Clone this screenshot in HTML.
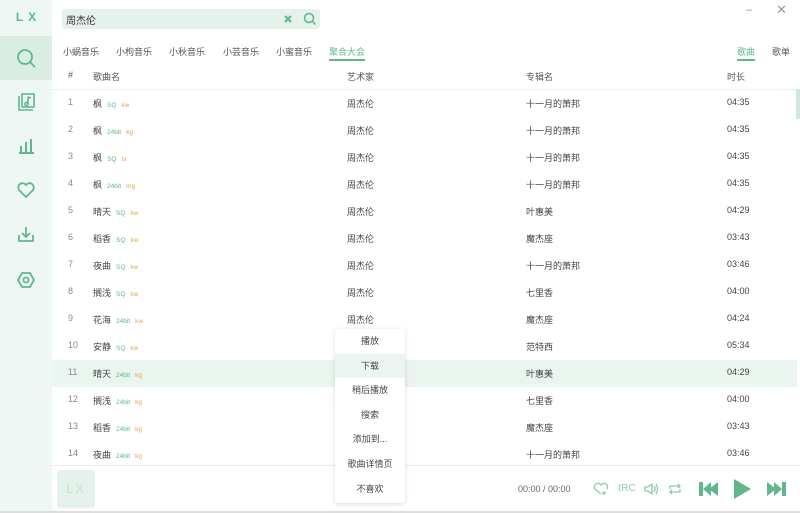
<!DOCTYPE html>
<html><head><meta charset="utf-8"><style>
*{margin:0;padding:0;box-sizing:border-box}
body{width:800px;height:513px;overflow:hidden;background:#fff;font-family:"Liberation Sans","Noto Sans CJK SC",sans-serif;font-size:9px;color:#444;position:relative}
.side{position:absolute;left:0;top:0;width:52px;height:513px;background:#eef7f3}
.logo{position:absolute;top:10px;left:0;width:52px;text-align:center;color:#5fb78d;font-weight:bold;font-size:12px;letter-spacing:5px;padding-left:5px}
.nav{position:absolute;left:0;width:52px;height:44px;display:flex;align-items:center;justify-content:center}
.nav.act{background:#d9ede3}
.search{position:absolute;left:62px;top:9px;width:258px;height:20px;background:#e4f2eb;border-radius:3px}
.search span{position:absolute;left:4px;top:3px;font-size:10px;color:#333}
.tabs span{position:absolute;top:45px;font-size:9px;color:#555}
.hdr span{position:absolute;top:70px;color:#555}
.row{position:absolute;left:52px;width:745px;height:27px}
.row span{position:absolute;top:7px}
.q{font-size:6.5px;color:#5fb78d;font-weight:normal}
.s{font-size:6.5px;color:#e0a84a;font-weight:normal}
.menu{position:absolute;z-index:5;left:335px;top:329px;width:70px;height:174px;background:#fff;box-shadow:0 1px 5px rgba(0,0,0,.15);border-radius:3px}
.menu div{height:24.6px;line-height:24.6px;text-align:center;color:#444;font-size:9px}
.foot{position:absolute;left:52px;top:465px;width:748px;height:46px;border-top:1px solid #eee;background:#fff}
</style></head><body>
<div class="side">
<div class="logo">LX</div>
<div class="nav act" style="top:36px"><svg width="22" height="22" viewBox="0 0 22 22" fill="none" stroke="#5fb78d" stroke-width="1.8"><circle cx="10" cy="10" r="7"/><path d="M15 15l5 5"/></svg></div>
<div class="nav" style="top:80px"><svg width="20" height="20" viewBox="0 0 20 20" fill="none" stroke="#5fb78d" stroke-width="1.6"><path d="M3 4v14h14"/><rect x="6" y="2" width="12" height="13"/><path d="M12 5v7"/><circle cx="10.5" cy="12" r="1.6"/><path d="M12 5l3 1"/></svg></div>
<div class="nav" style="top:124px"><svg width="20" height="20" viewBox="0 0 20 20" stroke="#5fb78d" stroke-width="2"><path d="M3 17h15M5 10v7M10 6v11M15 3v14"/></svg></div>
<div class="nav" style="top:168px"><svg width="20" height="20" viewBox="0 0 20 20" fill="none" stroke="#5fb78d" stroke-width="1.8"><path d="M10 17L3 10a4 4 0 017-5 4 4 0 017 5z"/></svg></div>
<div class="nav" style="top:212px"><svg width="20" height="20" viewBox="0 0 20 20" fill="none" stroke="#5fb78d" stroke-width="1.8"><path d="M3 11v6h14v-6M10 3v10M6 9l4 4 4-4"/></svg></div>
<div class="nav" style="top:258px"><svg width="20" height="20" viewBox="0 0 20 20" fill="none" stroke="#5fb78d" stroke-width="1.8"><path d="M6 3h8l4 7-4 7H6l-4-7z"/><circle cx="10" cy="10" r="2.5"/></svg></div>
</div>
<div style="position:absolute;left:746px;top:4px;color:#999;font-size:11px">–</div>
<div style="position:absolute;left:776px;top:2px;color:#999;font-size:13px">✕</div>
<div class="search"><span>周杰伦</span>
<svg style="position:absolute;left:221px;top:5px" width="10" height="10" viewBox="0 0 10 10" stroke="#5fb78d" stroke-width="2"><path d="M2 2l6 6M8 2l-6 6"/></svg>
<svg style="position:absolute;left:241px;top:3px" width="14" height="14" viewBox="0 0 14 14" fill="none" stroke="#5fb78d" stroke-width="1.5"><circle cx="6" cy="6" r="4.5"/><path d="M9.5 9.5l3 3"/></svg></div>
<div class="tabs"><span style="left:63px">小蜗音乐</span><span style="left:116px">小枸音乐</span><span style="left:169px">小秋音乐</span><span style="left:223px">小芸音乐</span><span style="left:276px">小蜜音乐</span><span style="left:329px;color:#5fb78d">聚合大会</span><span style="left:737px;color:#5fb78d">歌曲</span><span style="left:772px">歌单</span></div>
<div style="position:absolute;left:329px;top:59px;width:36px;height:2px;background:#5fb78d"></div>
<div style="position:absolute;left:737px;top:59px;width:18px;height:2px;background:#5fb78d"></div>
<div class="hdr"><span style="left:68px">#</span><span style="left:93px">歌曲名</span><span style="left:347px">艺术家</span><span style="left:526px">专辑名</span><span style="left:727px">时长</span></div>
<div style="position:absolute;left:52px;top:89px;width:748px;height:1px;background:#eef0ee"></div>
<div style="position:absolute;left:796px;top:89px;width:4px;height:30px;background:#cfe8da"></div>
<div id="rows"></div>
<div class="foot">
<span style="position:absolute;left:466px;top:18px;color:#666;font-size:9px">00:00 / 00:00</span>
<svg style="position:absolute;left:541px;top:16px" width="16" height="14" viewBox="0 0 16 14" fill="none" stroke="#8fcaab" stroke-width="1.3"><path d="M8 12L2 7a3 3 0 016-4 3 3 0 016 4"/><path d="M11 9v4M9 11h4"/></svg>
<span style="position:absolute;left:566px;top:17px;color:#8fcaab;font-size:10px">ℓRC</span>
<svg style="position:absolute;left:591px;top:16px" width="16" height="14" viewBox="0 0 16 14" fill="none" stroke="#8fcaab" stroke-width="1.3"><path d="M2 5h3l4-3v10l-4-3H2z"/><path d="M11 4q2 3 0 6M13 2q3 5 0 10"/></svg>
<svg style="position:absolute;left:616px;top:16px" width="14" height="14" viewBox="0 0 14 14" fill="none" stroke="#8fcaab" stroke-width="1.3"><path d="M2 7V4h10M10 2l2 2-2 2M12 7v3H2M4 12l-2-2 2-2"/></svg>
<svg style="position:absolute;left:646px;top:14px" width="22" height="18" viewBox="0 0 22 18" fill="#5fb78d"><rect x="1" y="2" width="4" height="14"/><path d="M5 9l8-7v14zM11 9l9-7v14z"/></svg>
<svg style="position:absolute;left:680px;top:12px" width="20" height="22" viewBox="0 0 20 22" fill="#5fb78d"><path d="M2 1l17 10L2 21z"/></svg>
<svg style="position:absolute;left:713px;top:14px" width="22" height="18" viewBox="0 0 22 18" fill="#5fb78d"><rect x="17" y="2" width="4" height="14"/><path d="M17 9L9 2v14zM11 9L2 2v14z"/></svg>
</div>
<div style="position:absolute;left:52px;top:465px;width:1px;height:46px"></div>
<div style="position:absolute;left:57px;top:470px;width:38px;height:38px;background:#e4f2eb;border-radius:3px;color:#c5e3d4;font-size:13px;text-align:center;line-height:38px;letter-spacing:2px">LX</div>
<div class="menu"><div>播放</div><div style="background:#eaf5ef">下载</div><div>稍后播放</div><div>搜索</div><div>添加到...</div><div>歌曲详情页</div><div>不喜欢</div></div>
<div style="position:absolute;left:0;top:511px;width:800px;height:2px;background:#ddd"></div>
<script>
var d=[["枫","SQ","kw","十一月的萧邦","04:35"],["枫","24bit","kg","十一月的萧邦","04:35"],["枫","SQ","tx","十一月的萧邦","04:35"],["枫","24bit","mg","十一月的萧邦","04:35"],["晴天","SQ","kw","叶惠美","04:29"],["稻香","SQ","kw","魔杰座","03:43"],["夜曲","SQ","kw","十一月的萧邦","03:46"],["搁浅","SQ","kw","七里香","04:00"],["花海","24bit","kw","魔杰座","04:24"],["安静","SQ","kw","范特西","05:34"],["晴天","24bit","kg","叶惠美","04:29"],["搁浅","24bit","kg","七里香","04:00"],["稻香","24bit","kg","魔杰座","03:43"],["夜曲","24bit","kg","十一月的萧邦","03:46"]];
var h="";d.forEach(function(r,i){h+='<div class="row" style="top:'+(90+27*i)+'px;'+(i==10?'background:#eaf5ef':'')+'"><span style="left:16px;color:#888">'+(i+1)+'</span><span style="left:41px">'+r[0]+' &nbsp;<b class="q">'+r[1]+'</b> &nbsp;<b class="s">'+r[2]+'</b></span><span style="left:295px">周杰伦</span><span style="left:474px">'+r[3]+'</span><span style="left:675px">'+r[4]+'</span></div>'});
document.getElementById("rows").innerHTML=h;
</script>
</body></html>
